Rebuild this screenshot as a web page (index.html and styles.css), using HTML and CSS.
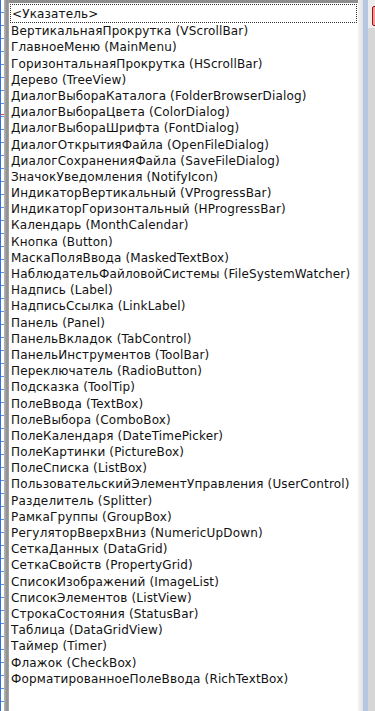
FILE: index.html
```html
<!DOCTYPE html>
<html lang="ru">
  <head>
    <meta charset="UTF-8" />
    <meta name="viewport" content="width=device-width, initial-scale=1.0" />
    <title>Панель элементов</title>
    <link rel="stylesheet" href="styles.css">
  </head>
  <body>
    <div class="frame">
      <div class="form-edge">
        <span class="mark-red"></span>
      </div>
      <div class="side-border"></div>

      <ul class="toolbox">
        <li class="focused">&lt;Указатель&gt;</li>
        <li>ВертикальнаяПрокрутка (VScrollBar)</li>
        <li>ГлавноеМеню (MainMenu)</li>
        <li>ГоризонтальнаяПрокрутка (HScrollBar)</li>
        <li>Дерево (TreeView)</li>
        <li>ДиалогВыбораКаталога (FolderBrowserDialog)</li>
        <li>ДиалогВыбораЦвета (ColorDialog)</li>
        <li>ДиалогВыбораШрифта (FontDialog)</li>
        <li>ДиалогОткрытияФайла (OpenFileDialog)</li>
        <li>ДиалогСохраненияФайла (SaveFileDialog)</li>
        <li>ЗначокУведомления (NotifyIcon)</li>
        <li>ИндикаторВертикальный (VProgressBar)</li>
        <li>ИндикаторГоризонтальный (HProgressBar)</li>
        <li>Календарь (MonthCalendar)</li>
        <li>Кнопка (Button)</li>
        <li>МаскаПоляВвода (MaskedTextBox)</li>
        <li>НаблюдательФайловойСистемы (FileSystemWatcher)</li>
        <li>Надпись (Label)</li>
        <li>НадписьСсылка (LinkLabel)</li>
        <li>Панель (Panel)</li>
        <li>ПанельВкладок (TabControl)</li>
        <li>ПанельИнструментов (ToolBar)</li>
        <li>Переключатель (RadioButton)</li>
        <li>Подсказка (ToolTip)</li>
        <li>ПолеВвода (TextBox)</li>
        <li>ПолеВыбора (ComboBox)</li>
        <li>ПолеКалендаря (DateTimePicker)</li>
        <li>ПолеКартинки (PictureBox)</li>
        <li>ПолеСписка (ListBox)</li>
        <li>ПользовательскийЭлементУправления (UserControl)</li>
        <li>Разделитель (Splitter)</li>
        <li>РамкаГруппы (GroupBox)</li>
        <li>РегуляторВверхВниз (NumericUpDown)</li>
        <li>СеткаДанных (DataGrid)</li>
        <li>СеткаСвойств (PropertyGrid)</li>
        <li>СписокИзображений (ImageList)</li>
        <li>СписокЭлементов (ListView)</li>
        <li>СтрокаСостояния (StatusBar)</li>
        <li>Таблица (DataGridView)</li>
        <li>Таймер (Timer)</li>
        <li>Флажок (CheckBox)</li>
        <li>ФорматированноеПолеВвода (RichTextBox)</li>
      </ul>

      <div class="scroll-edge"></div>
      <div class="scroll-track"></div>
      <div class="next-panel">
        <span class="badge"></span>
      </div>
    </div>
  </body>
</html>
```

FILE: styles.css
```css
html,
body {
  margin: 0;
  padding: 0;
  background: #ffffff;
}

.frame {
  display: flex;
  height: 711px;
  overflow: hidden;
}

/* край формы дизайнера слева */
.form-edge {
  position: relative;
  width: 3px;
  border-left: 1px solid #2f6fe0;
  background: repeating-linear-gradient(
    to bottom,
    #ffffff 0,
    #ffffff 12px,
    #5b8ff0 12px,
    #5b8ff0 13px
  );
}

.mark-red {
  position: absolute;
  left: 0;
  top: 114px;
  width: 3px;
  height: 1px;
  background: #e04040;
}

.side-border {
  width: 5px;
  background: linear-gradient(to right, #b8b8b8, #8c8c8c 60%, #a8a8a8);
}

.toolbox {
  flex: 1;
  margin: 0;
  padding: 4px 1px 0 1px;
  list-style: none;
  border-top: 3px solid #8e8e8e;
  font-family: Tahoma, "DejaVu Sans", "Liberation Sans", sans-serif;
  font-size: 12px;
  letter-spacing: 0.15px;
  color: #111111;
}

.toolbox li {
  height: 16.2px;
  line-height: 16.2px;
  padding-left: 1px;
  white-space: nowrap;
}

.toolbox li.focused {
  height: 15.2px;
  line-height: 15px;
  border: 1px dotted #333333;
  margin-top: -3px;
  padding-top: 2px;
}

.scroll-edge {
  width: 5px;
  background: linear-gradient(to right, #f4f4f4, #e2e2e2);
}

.scroll-track {
  width: 5px;
  background: #b3c7e1;
}

.next-panel {
  position: relative;
  width: 7px;
  background: linear-gradient(to bottom, #ececec 0, #ececec 28px, #d6d6d6 28px);
}

.badge {
  position: absolute;
  left: 4px;
  top: 6px;
  width: 6px;
  height: 18px;
  background: #f29a9a;
  border: 1px solid #a01010;
  border-radius: 2px;
}
```
